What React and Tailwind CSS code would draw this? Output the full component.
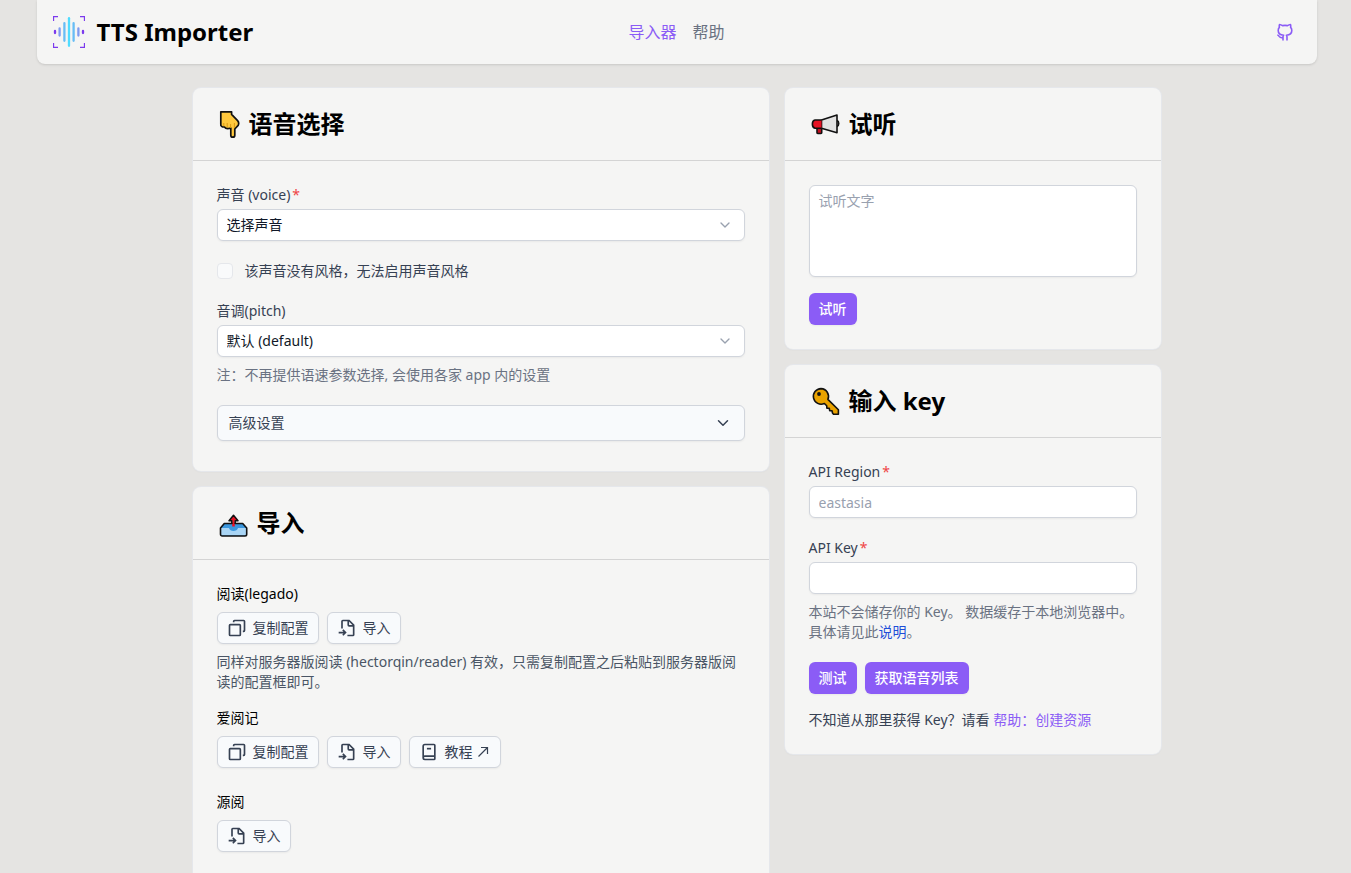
import { ChevronDown } from 'lucide-react';

const field =
  'block w-full rounded-md border border-gray-300 bg-white text-sm leading-5 text-gray-900 shadow-xs placeholder:text-gray-400';

function Logo() {
  return (
    <svg className="size-8" viewBox="0 0 32 32" fill="none" aria-hidden="true">
      <path
        d="M.5 5V.5H5M27 .5h4.500V5M31.500 27v4.500H27M5 31.500H.5V27"
        stroke="#7c3aed"
        strokeWidth="1.300"
      />
      <g strokeLinecap="round" strokeWidth="2.300">
        <path d="M2 15v2M30 15v2" stroke="#7c3aed" />
        <path d="M6.600 12.400v7.200M25.400 12.400v7.200" stroke="#7e9bf0" />
        <path d="M11.400 7.200v17.600M20.600 7.200v17.600" stroke="#67bdf5" />
        <path d="M16 2.200v27.600" stroke="#4fdcff" />
      </g>
    </svg>
  );
}

function GithubMark() {
  return (
    <svg
      className="size-5"
      viewBox="0 0 20 20"
      fill="none"
      stroke="currentColor"
      strokeWidth="1.600"
      strokeLinejoin="round"
      aria-hidden="true"
    >
      <path d="M8 18.400v-3.300c0-.9.2-1.400.6-1.900-3.300-.3-5.400-1.700-5.400-4.800 0-1.300.4-2.200 1.200-3-.3-1-.2-2 .1-2.900 1.200.1 2.100.5 3 1.100 1.600-.3 3.400-.3 5 0 .9-.6 1.800-1 3-1.100.3.9.4 1.900.1 2.900.8.8 1.200 1.700 1.200 3 0 3.100-2.100 4.500-5.400 4.800.4.500.6 1 .6 1.900v3.300" />
      <path d="M8 15.600c-2.200.4-3.100-.1-3.800-1.200-.4-.8-.9-1.200-1.900-1.400" />
    </svg>
  );
}

function PointDown() {
  return (
    <svg className="h-8 w-6" viewBox="0 0 24 32" aria-hidden="true">
      <path
        d="M3.800 3.800h10.800v2.600l6 6.200c1.700 1.900 1.400 4.600-.5 5.900l-2.300 2.500v6.200a2 2 0 0 1-4 0v-7.200c-3.600 1.500-5.600.2-6.400-1-2.200.2-4-1-3.600-2.800Z"
        fill="#ffc83d"
        stroke="#111"
        strokeWidth="1.700"
        strokeLinejoin="round"
      />
      <path d="M6.800 15v3M10.200 15v4M13.600 16v4M17.400 15v5" stroke="#d99a12" strokeWidth="1" />
    </svg>
  );
}

function Megaphone() {
  return (
    <svg className="size-8" viewBox="0 0 32 32" aria-hidden="true">
      <path d="M8 19.500v5.200c0 1 4.700 1 4.700 0v-5.200" fill="#c50f1f" stroke="#111" strokeWidth="1.600" />
      <path d="M28 12.500c2.300.8 2.300 5.200 0 6" fill="#ccc" stroke="#111" strokeWidth="1.600" />
      <path d="m12.500 12 15.500-5v17.800l-15.500-4.600Z" fill="#e2e2e2" stroke="#111" strokeWidth="1.600" strokeLinejoin="round" />
      <path d="M12.500 12H6C2.500 12.500 2.500 19.500 6 20.200h6.500Z" fill="#e81224" />
      <path d="M12.500 12H6C2.500 12.500 2.500 19.500 6 20.200h6.500" fill="none" stroke="#111" strokeWidth="1.600" strokeLinejoin="round" />
    </svg>
  );
}

function KeyPicture() {
  return (
    <svg className="size-8" viewBox="0 0 32 32" aria-hidden="true">
      <path
        d="M12 3.600a7.800 7.800 0 1 0 3.400 14.900l2.300 2.300.2 2.500h2.400l.4 2.400h2.300l.5 2.300 1 1.200h4.900v-4.400L18.900 14.400A7.800 7.800 0 0 0 12 3.600Z"
        fill="#eaa300"
        stroke="#111"
        strokeWidth="1.600"
        strokeLinejoin="round"
      />
      <circle cx="10" cy="9" r="1.900" fill="#111" />
    </svg>
  );
}

function Outbox() {
  return (
    <svg className="size-8" viewBox="0 0 32 32" aria-hidden="true">
      <path d="M7.300 16.500h18.400l4 4.500v6.300c0 1-.8 1.700-1.700 1.700H5.200c-1 0-1.700-.7-1.700-1.700V21Z" fill="#3a96dd" />
      <path d="M3.700 21H12c.8 4 8.200 4 9 0h8.300v7.600H3.700Z" fill="#a9d5f5" />
      <path
        d="M7.300 16.500h18.400l4 4.500v6.300c0 1-.8 1.700-1.700 1.700H5.200c-1 0-1.700-.7-1.700-1.700V21Z"
        fill="none"
        stroke="#111"
        strokeWidth="1.600"
        strokeLinejoin="round"
      />
      <path d="m16.500 8.700 4.400 4.800h-3.100v6h-2.600v-6h-3.100Z" fill="#e81224" />
      <path d="M14.800 17v-3.300H12L16.500 8.300l4.500 5.400h-2.800V17" fill="none" stroke="#111" strokeWidth="1.500" strokeLinejoin="round" />
    </svg>
  );
}

function LineIcon({ children }) {
  return (
    <svg
      className="size-5 shrink-0"
      viewBox="0 0 24 24"
      fill="none"
      stroke="currentColor"
      strokeWidth="2"
      aria-hidden="true"
    >
      {children}
    </svg>
  );
}

const CopyIcon = () => (
  <LineIcon>
    <rect x="3" y="8" width="13" height="13" rx="1" />
    <path d="M8 5V4a1 1 0 0 1 1-1h11a1 1 0 0 1 1 1v11a1 1 0 0 1-1 1h-1" />
  </LineIcon>
);

const ImportIcon = () => (
  <LineIcon>
    <path d="M6 12.500V4a1 1 0 0 1 1-1h7.500L20 8.500V20a1 1 0 0 1-1 1h-6.500" />
    <path d="M13.500 3v5.500a1 1 0 0 0 1 1H20" />
    <path d="M2 17.500h7.500M7 14.300l3.200 3.200L7 20.700" />
  </LineIcon>
);

const BookIcon = () => (
  <LineIcon>
    <path d="M5 19V5a2 2 0 0 1 2-2h11a1 1 0 0 1 1 1v16a1 1 0 0 1-1 1H7a2 2 0 0 1-2-2Zm0 0a2 2 0 0 1 2-2h12" />
    <path d="M9.500 8h5" />
  </LineIcon>
);

const ArrowOut = () => (
  <svg className="-ml-0.5 size-3.5" viewBox="0 0 14 14" fill="none" stroke="currentColor" aria-hidden="true">
    <path d="M1.500 11.500 10 3M4 2.500h6.500V9" strokeWidth="1.200" />
  </svg>
);

function Card({ icon, title, children }) {
  return (
    <section className="rounded-lg bg-stone-100 shadow-xs ring-1 ring-[#e5e7eb]">
      <div className="flex items-center gap-2 border-b border-[#d4d4d4] px-6 py-5">
        <span className="-my-1 flex">{icon}</span>
        <h2 className="text-2xl font-bold text-black">{title}</h2>
      </div>
      <div className="p-6">{children}</div>
    </section>
  );
}

function Label({ htmlFor, required, children }) {
  return (
    <label htmlFor={htmlFor} className="mb-1 block text-sm text-gray-700">
      {children}
      {required && <span className="ml-0.5 text-[#ef4444]">*</span>}
    </label>
  );
}

function Select({ id, children }) {
  return (
    <div className="relative">
      <select id={id} className={`${field} h-8 appearance-none px-[9px]`}>
        <option>{children}</option>
      </select>
      <ChevronDown
        className="pointer-events-none absolute top-2 right-3 size-4 text-gray-400"
        aria-hidden="true"
      />
    </div>
  );
}

function PlainButton({ children }) {
  return (
    <button
      type="button"
      className="flex h-8 items-center gap-1.5 rounded-md border border-gray-300 bg-slate-50 px-[9px] text-sm text-gray-700 shadow-xs"
    >
      {children}
    </button>
  );
}

function PrimaryButton({ children }) {
  return (
    <button type="button" className="h-8 rounded-md bg-[#8b5cf6] px-2.5 text-sm font-medium text-white shadow-xs">
      {children}
    </button>
  );
}

function Target({ name, children }) {
  return (
    <div>
      <h3 className="mb-2 text-sm text-black">{name}</h3>
      <div className="flex flex-wrap gap-2">{children}</div>
    </div>
  );
}

const CopyButton = () => (
  <PlainButton>
    <CopyIcon />
    复制配置
  </PlainButton>
);

const ImportButton = () => (
  <PlainButton>
    <ImportIcon />
    导入
  </PlainButton>
);

export default function App() {
  return (
    <div className="min-h-screen bg-[#e5e4e2] pl-0.5 font-['Noto_Sans','Noto_Sans_CJK_SC',sans-serif]" lang="zh-CN">
      <header className="mx-auto grid h-16 max-w-7xl grid-cols-[1fr_auto_1fr] items-center rounded-b-lg bg-stone-100 px-4 shadow-sm">
        <div className="flex items-center gap-3">
          <Logo />
          <h1 className="text-2xl font-bold text-black">TTS Importer</h1>
        </div>
        <nav className="flex gap-4 text-base">
          <a href="#importer" className="text-[#8b5cf6]">
            导入器
          </a>
          <a href="#help" className="text-gray-500">
            帮助
          </a>
        </nav>
        <a href="#github" aria-label="GitHub" className="mr-1.5 justify-self-end text-[#8b5cf6]">
          <GithubMark />
        </a>
      </header>

      <main className="mx-auto mt-6 grid max-w-[968px] items-start gap-4 md:grid-cols-[576fr_376fr]">
        <div className="grid min-w-0 gap-4">
          <Card icon={<PointDown />} title="语音选择">
            <form className="grid gap-5 pb-1.5">
              <div>
                <Label htmlFor="voice" required>
                  声音 (voice)
                </Label>
                <Select id="voice">选择声音</Select>
              </div>
              <div className="flex items-center gap-3">
                <input
                  id="style"
                  type="checkbox"
                  disabled
                  className="size-4 appearance-none rounded border border-gray-200 bg-gray-50"
                />
                <label htmlFor="style" className="text-sm text-gray-700">
                  该声音没有风格，无法启用声音风格
                </label>
              </div>
              <div>
                <Label htmlFor="pitch">音调(pitch)</Label>
                <Select id="pitch">默认 (default)</Select>
                <p className="mt-2 text-sm text-gray-500">注：不再提供语速参数选择, 会使用各家 app 内的设置</p>
              </div>
              <button
                type="button"
                className="flex h-9 items-center justify-between rounded-md border border-gray-300 bg-slate-50 pr-3 pl-[11px] text-sm text-gray-700 shadow-xs"
              >
                高级设置
                <ChevronDown className="size-[18px]" aria-hidden="true" />
              </button>
            </form>
          </Card>

          <Card icon={<Outbox />} title="导入">
            <div className="grid gap-6">
              <div className="-mb-2">
                <Target name="阅读(legado)">
                  <CopyButton />
                  <ImportButton />
                </Target>
                <p className="mt-2 text-sm text-gray-600">
                  同样对服务器版阅读 (hectorqin/reader) 有效，只需复制配置之后粘贴到服务器版阅读的配置框即可。
                </p>
              </div>
              <Target name="爱阅记">
                <CopyButton />
                <ImportButton />
                <PlainButton>
                  <BookIcon />
                  教程
                  <ArrowOut />
                </PlainButton>
              </Target>
              <div className="pb-6">
                <Target name="源阅">
                  <ImportButton />
                </Target>
              </div>
            </div>
          </Card>
        </div>

        <div className="grid min-w-0 gap-4">
          <Card icon={<Megaphone />} title="试听">
            <textarea
              aria-label="试听文字"
              placeholder="试听文字"
              rows={3}
              className={`${field} mb-4 h-[92px] resize-none px-[9px] py-[5px]`}
            />
            <PrimaryButton>试听</PrimaryButton>
          </Card>

          <Card icon={<KeyPicture />} title="输入 key">
            <form className="grid gap-5">
              <div>
                <Label htmlFor="region" required>
                  API Region
                </Label>
                <input id="region" type="text" placeholder="eastasia" className={`${field} h-8 px-[9px]`} />
              </div>
              <div>
                <Label htmlFor="key" required>
                  API Key
                </Label>
                <input id="key" type="text" className={`${field} h-8 px-[9px]`} />
                <p className="mt-2 text-sm text-gray-500">
                  <span>本站不会储存你的 Key。 数据缓存于本地浏览器中。</span>
                  <span>具体请见此</span>
                  <a href="#privacy" className="text-[#1d4ed8]">
                    说明
                  </a>
                  <span>。</span>
                </p>
              </div>
              <div className="flex gap-2">
                <PrimaryButton>测试</PrimaryButton>
                <PrimaryButton>获取语音列表</PrimaryButton>
              </div>
            </form>
            <p className="mt-4 text-sm text-gray-700">
              不知道从那里获得 Key？请看{' '}
              <a href="#create" className="text-[#8b5cf6]">
                帮助：创建资源
              </a>
            </p>
          </Card>
        </div>
      </main>
    </div>
  );
}
